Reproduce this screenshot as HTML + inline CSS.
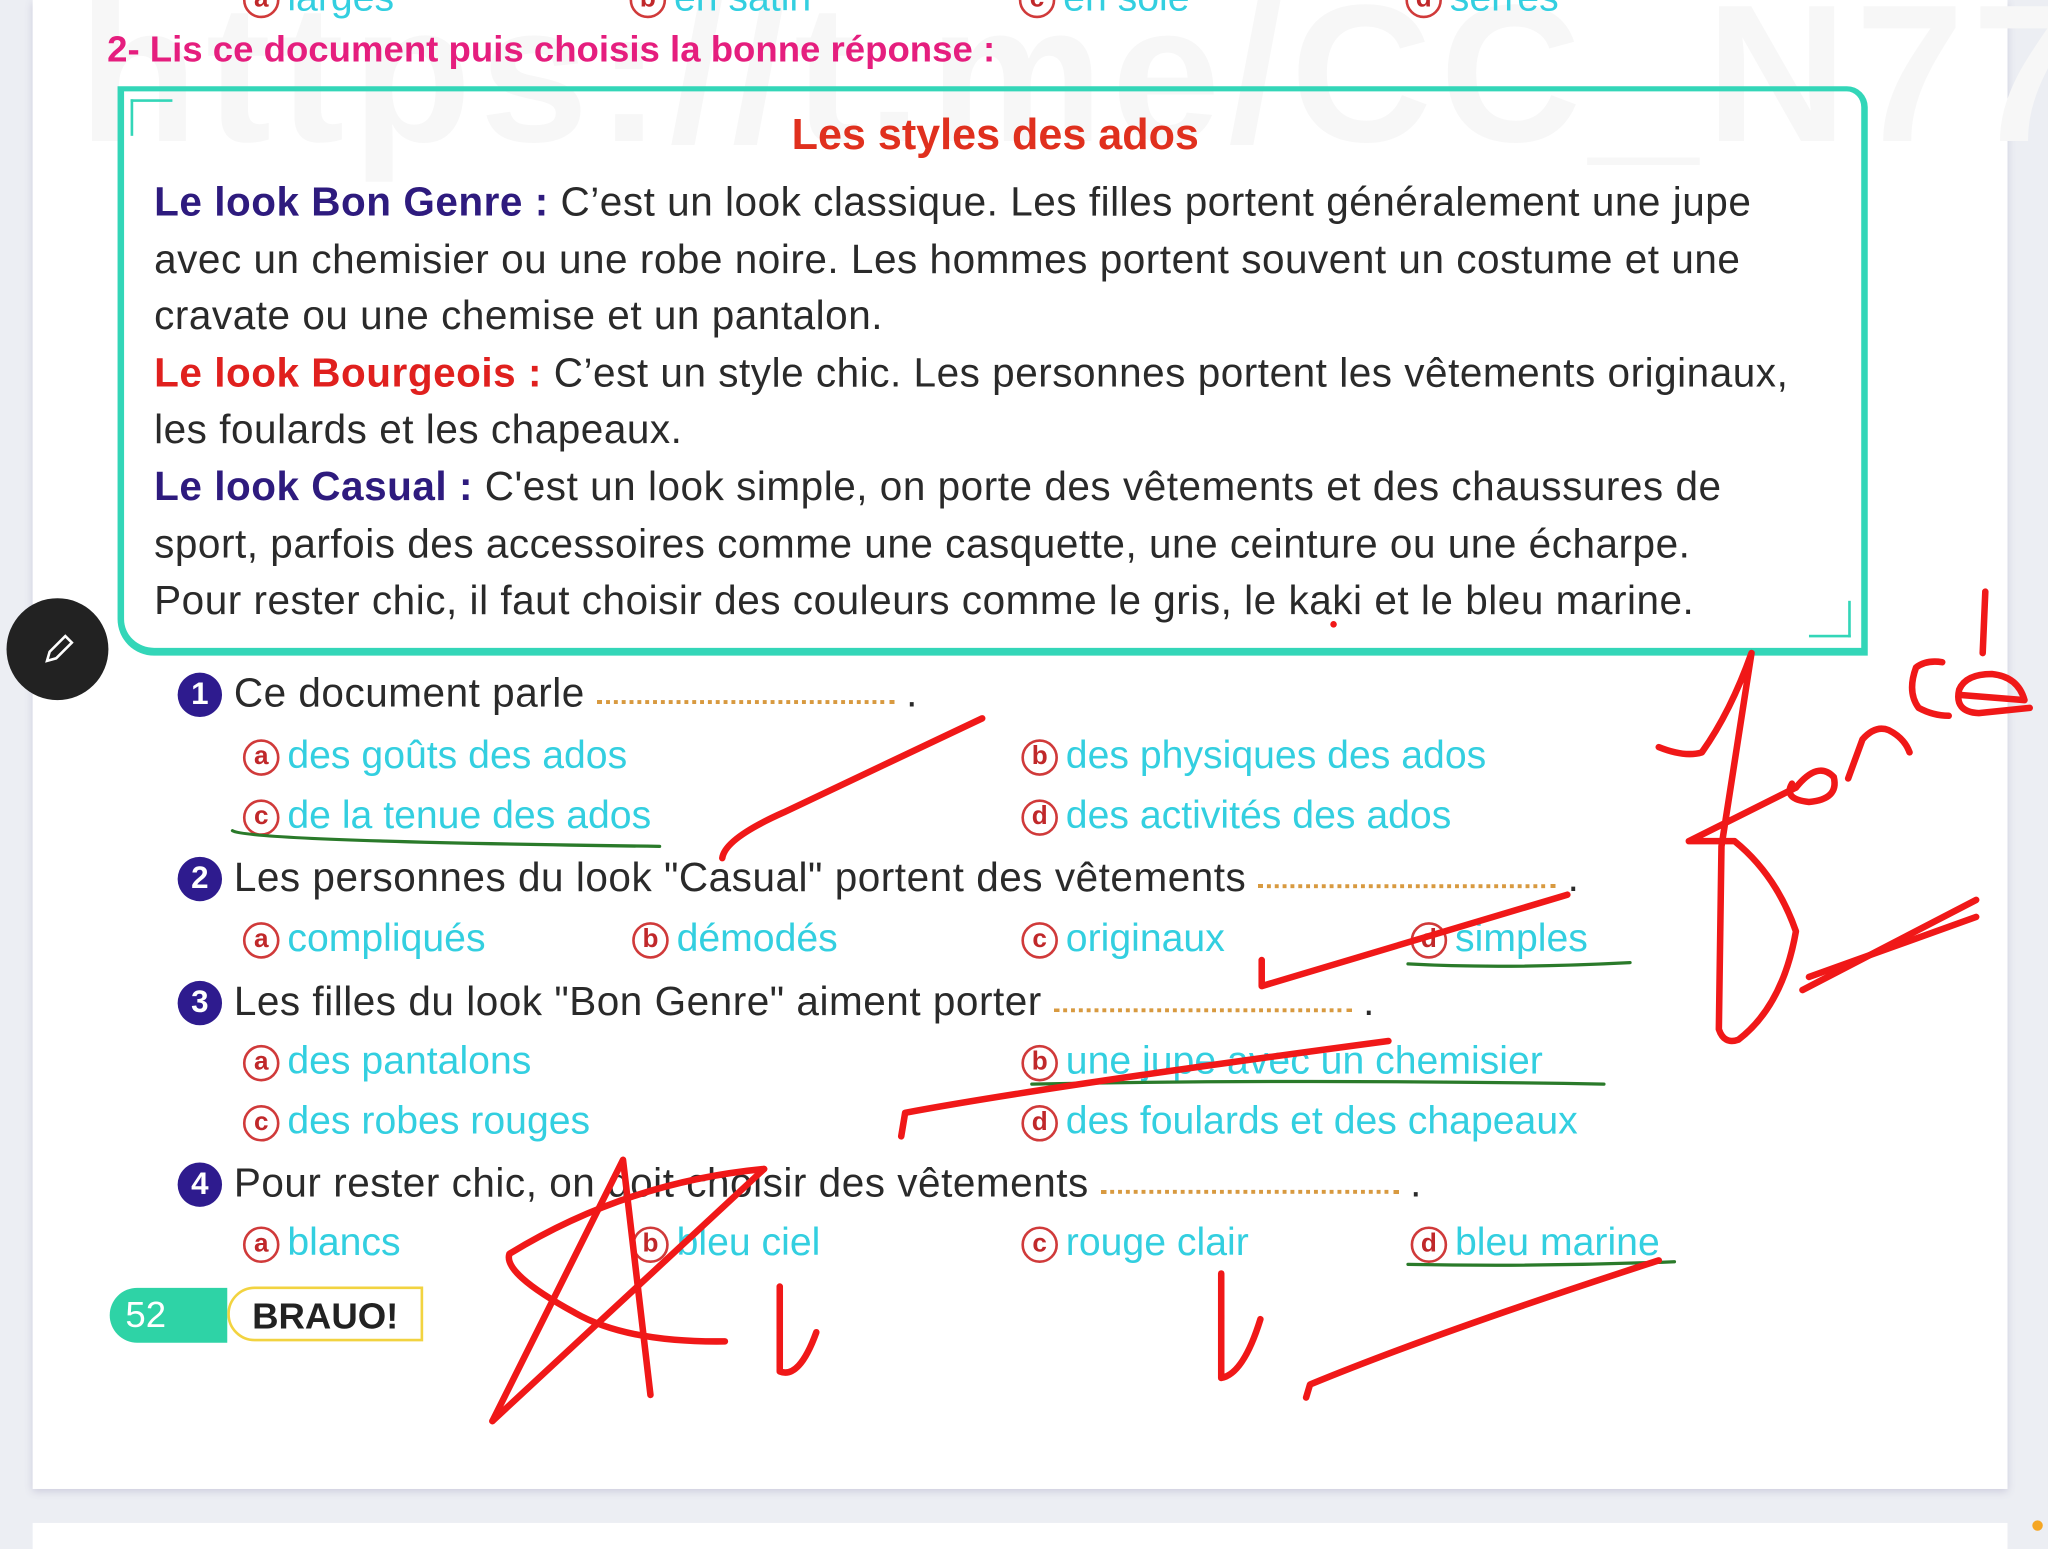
<!DOCTYPE html>
<html><head><meta charset="utf-8"><style>
html,body{margin:0;padding:0;width:2048px;height:1536px;overflow:hidden;background:#eceef3;}
#s{position:absolute;left:0;top:0;width:1568px;height:1176px;transform:scale(1.306122);transform-origin:0 0;font-family:"Liberation Sans",sans-serif;}
.pg{position:absolute;left:25px;top:0;width:1512px;height:1140px;background:#fff;box-shadow:0 2px 6px #ccd;}
.pg2{position:absolute;left:25px;top:1166px;width:1512px;height:20px;background:#fff;}
.a{position:absolute;white-space:nowrap;}
.t{font-size:31px;color:#2a2a2a;letter-spacing:0.4px;}
.o{font-size:30px;color:#33cfe0;}
.c{display:inline-block;width:24px;height:24px;border:2px solid #d03a3a;border-radius:50%;color:#c0282a;font-size:20px;font-weight:bold;text-align:center;line-height:23px;vertical-align:3px;margin-right:6px;letter-spacing:0;}
.n{display:inline-block;width:34px;height:34px;border-radius:50%;background:#2e1b8e;color:#fff;font-size:24px;font-weight:bold;text-align:center;line-height:34px;vertical-align:2px;letter-spacing:0;}
.dots{display:inline-block;border-bottom:3px dotted #d89a40;vertical-align:2px;}
</style></head><body><div id="s">
<div class="pg"></div><div class="pg2"></div>
<div class="a" style="left:60px;top:-30px;font-size:150px;font-weight:bold;color:#f7f7f7;letter-spacing:6px">https://t.me/CC_N77</div>
<div class="a o" style="left:186px;top:-18px"><span class="c">a</span>larges</div>
<div class="a o" style="left:482px;top:-18px"><span class="c">b</span>en satin</div>
<div class="a o" style="left:780px;top:-18px"><span class="c">c</span>en soie</div>
<div class="a o" style="left:1076px;top:-18px"><span class="c">d</span>serres</div>
<div class="a" style="left:82px;top:22px;font-size:28px;font-weight:bold;color:#e51e7e">2- Lis ce document puis choisis la bonne réponse :</div>
<div class="a" style="left:90px;top:66px;width:1330px;height:426px;border:3px solid #33d6b8;border-top-width:4px;border-right-width:5px;border-left-width:5px;border-bottom-width:6px;border-radius:0 16px 0 28px;"></div>
<div class="a" style="left:100px;top:76px;width:30px;height:26px;border-left:2px solid #33d6b8;border-top:2px solid #33d6b8"></div>
<div class="a" style="left:1385px;top:460px;width:30px;height:26px;border-right:2px solid #33d6b8;border-bottom:2px solid #33d6b8"></div>
<div class="a" style="left:0;width:1524px;top:84px;text-align:center;font-size:33px;font-weight:bold;color:#e0301e">Les styles des ados</div>
<div class="a t" style="left:118px;top:133px;line-height:43.6px">
<div><b style="color:#2e1b7e">Le look Bon Genre :</b> C’est un look classique. Les filles portent généralement une jupe</div>
<div>avec un chemisier ou une robe noire. Les hommes portent souvent un costume et une</div>
<div>cravate ou une chemise et un pantalon.</div>
<div><b style="color:#e0201e">Le look Bourgeois :</b> C’est un style chic. Les personnes portent les vêtements originaux,</div>
<div>les foulards et les chapeaux.</div>
<div><b style="color:#2e1b7e">Le look Casual :</b> C'est un look simple, on porte des vêtements et des chaussures de</div>
<div>sport, parfois des accessoires comme une casquette, une ceinture ou une écharpe.</div>
<div>Pour rester chic, il faut choisir des couleurs comme le gris, le kaki et le bleu marine.</div>
</div>
<div class="a" style="left:5px;top:458px;width:78px;height:78px;border-radius:50%;background:#222;"></div>
<svg class="a" style="left:30px;top:482px" width="30" height="30" viewBox="0 0 30 30"><path d="M6 24 L8 17 L20 5 L25 10 L13 22 Z" fill="none" stroke="#fff" stroke-width="2"/></svg>
<div class="a t" style="left:136px;top:513px"><span class="n">1</span> Ce document parle <span class="dots" style="width:228px"></span> .</div>
<div class="a o" style="left:186px;top:562px"><span class="c">a</span>des goûts des ados</div>
<div class="a o" style="left:782px;top:562px"><span class="c">b</span>des physiques des ados</div>
<div class="a o" style="left:186px;top:608px"><span class="c">c</span>de la tenue des ados</div>
<div class="a o" style="left:782px;top:608px"><span class="c">d</span>des activités des ados</div>
<div class="a t" style="left:136px;top:654px"><span class="n">2</span>  Les personnes du look "Casual" portent des vêtements <span class="dots" style="width:228px"></span> .</div>
<div class="a o" style="left:186px;top:702px"><span class="c">a</span>compliqués</div>
<div class="a o" style="left:484px;top:702px"><span class="c">b</span>démodés</div>
<div class="a o" style="left:782px;top:702px"><span class="c">c</span>originaux</div>
<div class="a o" style="left:1080px;top:702px"><span class="c">d</span>simples</div>
<div class="a t" style="left:136px;top:749px"><span class="n">3</span> Les filles du look "Bon Genre" aiment porter <span class="dots" style="width:228px"></span> .</div>
<div class="a o" style="left:186px;top:796px"><span class="c">a</span>des pantalons</div>
<div class="a o" style="left:782px;top:796px"><span class="c">b</span>une jupe avec un chemisier</div>
<div class="a o" style="left:186px;top:842px"><span class="c">c</span>des robes rouges</div>
<div class="a o" style="left:782px;top:842px"><span class="c">d</span>des foulards et des chapeaux</div>
<div class="a t" style="left:136px;top:888px"><span class="n">4</span> Pour rester chic, on doit choisir des vêtements <span class="dots" style="width:228px"></span> .</div>
<div class="a o" style="left:186px;top:935px"><span class="c">a</span>blancs</div>
<div class="a o" style="left:484px;top:935px"><span class="c">b</span>bleu ciel</div>
<div class="a o" style="left:782px;top:935px"><span class="c">c</span>rouge clair</div>
<div class="a o" style="left:1080px;top:935px"><span class="c">d</span>bleu marine</div>
<div class="a" style="left:84px;top:986px;width:90px;height:42px;background:#2ed3a6;border-radius:21px 0 0 21px;color:#fff;font-size:28px;line-height:42px;padding-left:12px;box-sizing:border-box">52</div>
<div class="a" style="left:174px;top:985px;width:150px;height:42px;background:#fff;border:2px solid #f2d340;border-radius:22px 0 0 22px;font-size:28px;font-weight:bold;color:#222;line-height:42px;text-align:center;box-sizing:border-box">BRAUO!</div>
<svg class="a" style="left:0;top:0" width="1568" height="1176" fill="none" stroke-linecap="round" stroke-linejoin="round">
<g stroke="#2a7a2a" stroke-width="2.5">
<path d="M178 636 Q190 644 505 648"/><path d="M1078 738 Q1150 742 1248 737"/><path d="M790 830 Q1000 826 1228 830"/><path d="M1078 968 Q1180 970 1282 966"/>
</g>
<g stroke="#f01818" stroke-width="5">
<path d="M553 657 Q555 642 600 622 L752 550"/>
<path d="M966 735 L966 755 L1200 685"/>
<path d="M690 870 L693 852 Q800 832 1063 797"/>
<path d="M1000 1070 L1003 1060 Q1100 1020 1270 965"/>
<path d="M377 1088 L477 888 L498 1068"/>
<path d="M585 895 L377 1088"/>
<path d="M585 895 Q480 905 390 960 Q385 975 440 1005 Q480 1028 555 1027"/>
<path d="M597 985 L597 1050 Q612 1056 625 1020"/>
<path d="M935 975 L935 1055 Q952 1052 965 1010"/>
<path d="M1270 572 Q1290 580 1303 576 Q1325 545 1341 500 L1318 648 L1316 788 Q1320 800 1331 796 Q1365 770 1375 713 Q1360 670 1328 644 L1293 644 L1375 603"/>
<path d="M1375 603 Q1392 582 1404 595 Q1408 612 1385 614 Q1365 612 1372 600"/>
<path d="M1415 596 L1426 566 Q1436 555 1446 559 Q1458 565 1462 576"/>
<path d="M1487 507 Q1475 505 1467 511 Q1460 530 1469 542 Q1480 548 1492 548"/>
<path d="M1500 532 L1550 536 Q1545 518 1525 516 Q1505 516 1500 528 Q1496 545 1515 546 L1554 542"/>
<path d="M1520 453 L1518 500"/>
<path d="M1380 758 L1513 689"/><path d="M1385 748 L1513 702"/>
</g>
<circle cx="1021" cy="478" r="2.5" fill="#f01818"/>
</svg>
<div class="a" style="left:1556px;top:1164px;width:8px;height:8px;border-radius:50%;background:#f5a623"></div>
</div></body></html>
